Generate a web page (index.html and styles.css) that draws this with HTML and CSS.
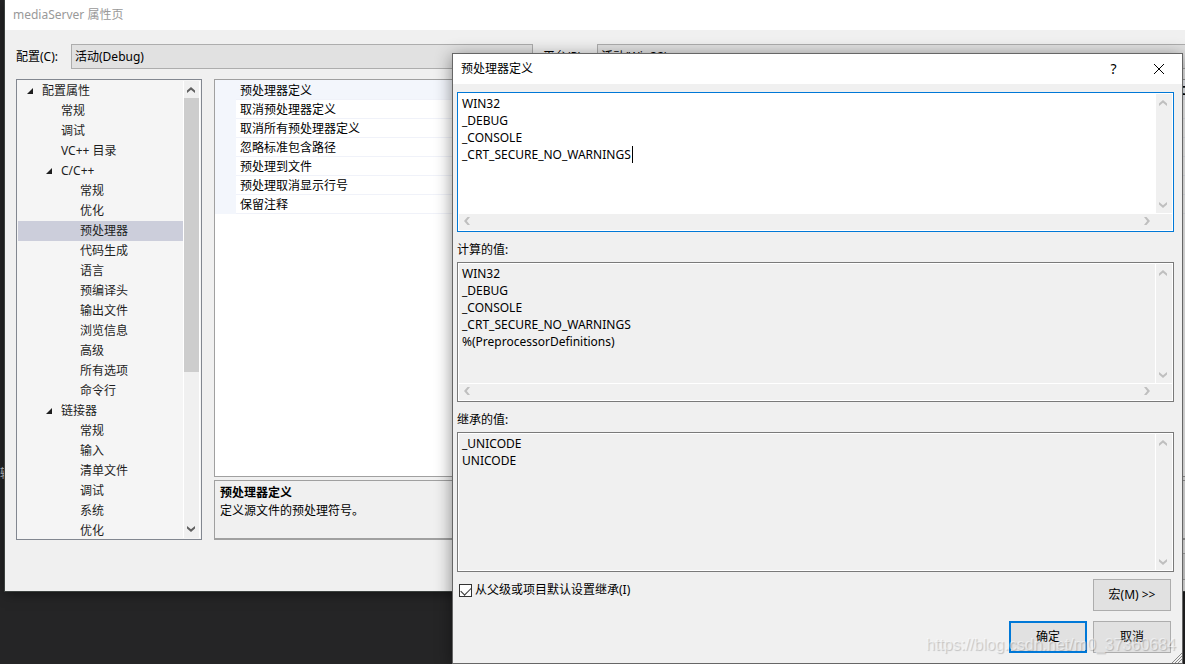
FILE: index.html
```html
<!DOCTYPE html>
<html lang="zh-CN">
  <head>
    <meta charset="utf-8">
    <title>mediaServer 属性页</title>
    <meta name="viewport" content="width=device-width, initial-scale=1">
    <link rel="stylesheet" href="styles.css">
  </head>
  <body>
    <!-- Shared icons -->
    <svg class="symbols" aria-hidden="true">
      <symbol id="up" viewBox="0 0 8 6"><path d="M0 3.5L4 0L8 3.5V6L4 2.8L0 6Z"/></symbol>
      <symbol id="down" viewBox="0 0 8 6"><path d="M0 0L4 3.2L8 0V2.5L4 6L0 2.5Z"/></symbol>
      <symbol id="left" viewBox="0 0 6 8"><path d="M3.5 0L0 4L3.5 8H6L2.8 4L6 0Z"/></symbol>
      <symbol id="right" viewBox="0 0 6 8"><path d="M0 0L3.2 4L0 8H2.5L6 4L2.5 0Z"/></symbol>
    </svg>

    <div class="desktop">
      <div class="editor-text">输</div>

      <!-- Property pages -->
      <div class="window">
        <div class="window-title">mediaServer 属性页</div>
        <div class="config-row">
          <label for="config">配置(C):</label>
          <select id="config"><option>活动(Debug)</option></select>
          <label class="platform-label" for="platform">平台(P):</label>
          <select id="platform" class="platform"><option>活动(Win32)</option></select>
        </div>
        <div class="panes">
          <div class="tree">
            <ul class="tree-list">
              <li><button class="arrow" aria-label="折叠"></button>配置属性</li>
              <li class="level1">常规</li>
              <li class="level1">调试</li>
              <li class="level1">VC++ 目录</li>
              <li class="level1"><button class="arrow" aria-label="折叠"></button>C/C++</li>
              <li class="level2">常规</li>
              <li class="level2">优化</li>
              <li class="level2 selected">预处理器</li>
              <li class="level2">代码生成</li>
              <li class="level2">语言</li>
              <li class="level2">预编译头</li>
              <li class="level2">输出文件</li>
              <li class="level2">浏览信息</li>
              <li class="level2">高级</li>
              <li class="level2">所有选项</li>
              <li class="level2">命令行</li>
              <li class="level1"><button class="arrow" aria-label="折叠"></button>链接器</li>
              <li class="level2">常规</li>
              <li class="level2">输入</li>
              <li class="level2">清单文件</li>
              <li class="level2">调试</li>
              <li class="level2">系统</li>
              <li class="level2">优化</li>
            </ul>
            <div class="vbar tree-bar">
              <button aria-label="向上"><svg width="8" height="6"><use href="#up"/></svg></button>
              <div class="thumb"></div>
              <button aria-label="向下"><svg width="8" height="6"><use href="#down"/></svg></button>
            </div>
          </div>
          <div class="details">
            <div class="grid">
              <ul class="props">
                <li class="current"><span>预处理器定义</span><b>C</b></li>
                <li><span>取消预处理器定义</span></li>
                <li><span>取消所有预处理器定义</span></li>
                <li><span>忽略标准包含路径</span></li>
                <li><span>预处理到文件</span></li>
                <li><span>预处理取消显示行号</span></li>
                <li><span>保留注释</span></li>
              </ul>
            </div>
            <div class="description">
              <b>预处理器定义</b>
              <p>定义源文件的预处理符号。</p>
            </div>
          </div>
        </div>
        <div class="window-footer">
          <button class="apply">应用(A)</button>
        </div>
      </div>

      <!-- Preprocessor definitions -->
      <div class="dialog" role="dialog" aria-labelledby="dialog-title">
        <div class="dialog-title">
          <span id="dialog-title">预处理器定义</span>
          <button aria-label="帮助">?</button>
          <button aria-label="关闭">
            <svg width="12" height="12" viewBox="0 0 12 12"><path d="M1 1L11 11M11 1L1 11" stroke="#000" fill="none"/></svg>
          </button>
        </div>
        <div class="dialog-body">
          <div class="box active">
            <textarea aria-label="预处理器定义" spellcheck="false">WIN32
_DEBUG
_CONSOLE
_CRT_SECURE_NO_WARNINGS</textarea>
            <div class="caret"></div>
            <div class="vbar">
              <button aria-label="向上"><svg width="8" height="6"><use href="#up"/></svg></button>
              <button aria-label="向下"><svg width="8" height="6"><use href="#down"/></svg></button>
            </div>
            <div class="hbar">
              <button aria-label="向左"><svg width="6" height="8"><use href="#left"/></svg></button>
              <button aria-label="向右"><svg width="6" height="8"><use href="#right"/></svg></button>
            </div>
          </div>

          <label class="box-label" for="computed">计算的值:</label>
          <div class="box">
            <textarea id="computed" readonly spellcheck="false">WIN32
_DEBUG
_CONSOLE
_CRT_SECURE_NO_WARNINGS
%(PreprocessorDefinitions)</textarea>
            <div class="vbar">
              <button aria-label="向上"><svg width="8" height="6"><use href="#up"/></svg></button>
              <button aria-label="向下"><svg width="8" height="6"><use href="#down"/></svg></button>
            </div>
            <div class="hbar">
              <button aria-label="向左"><svg width="6" height="8"><use href="#left"/></svg></button>
              <button aria-label="向右"><svg width="6" height="8"><use href="#right"/></svg></button>
            </div>
          </div>

          <label class="box-label" for="inherited">继承的值:</label>
          <div class="box">
            <textarea id="inherited" readonly spellcheck="false">_UNICODE
UNICODE</textarea>
            <div class="vbar">
              <button aria-label="向上"><svg width="8" height="6"><use href="#up"/></svg></button>
              <button aria-label="向下"><svg width="8" height="6"><use href="#down"/></svg></button>
            </div>
          </div>

          <div class="options">
            <label class="inherit"><input type="checkbox" checked>从父级或项目默认设置继承(I)</label>
            <button class="btn">宏(M) &gt;&gt;</button>
          </div>
          <div class="actions">
            <button class="btn default">确定</button>
            <button class="btn">取消</button>
          </div>
        </div>
        <svg class="grip" width="10" height="10" viewBox="0 0 10 10"><path d="M0 10L10 0M3 10L10 3M6 10L10 6" stroke="#888" fill="none"/></svg>
      </div>

      <div class="watermark">https://blog.csdn.net/m0_37360684</div>
    </div>
  </body>
</html>
```

FILE: styles.css
```css
* {
  box-sizing: border-box;
}
body {
  margin: 0;
  overflow: hidden;
  background: #252526;
  color: #000;
  font: 12px/18px "Noto Sans", "Noto Sans CJK SC", sans-serif;
}
button, select, textarea {
  font: inherit;
  color: inherit;
}
button {
  padding: 0;
  border: none;
  background: none;
}
ul {
  margin: 0;
  padding: 0;
  list-style: none;
}
.symbols {
  position: absolute;
  width: 0;
  height: 0;
}
.desktop {
  position: relative;
  height: 100vh;
  overflow: hidden;
}
.editor-text {
  position: absolute;
  top: 465px;
  left: 0;
  color: #ccc;
}

/* Property pages window, runs off the right edge */
.window {
  position: absolute;
  top: 0;
  left: 5px;
  right: -16px;
  height: 89vh;
  display: flex;
  flex-direction: column;
  background: #f0f0f0;
  box-shadow: 0 0 0 1px #3c413f, 0 2px 12px rgba(0, 0, 0, 0.5);
}
.window-title {
  height: 30px;
  padding-left: 8px;
  line-height: 30px;
  background: #fff;
  color: #999;
}
.config-row {
  display: flex;
  align-items: center;
  padding: 14px 0 10px 11px;
}
.config-row label {
  width: 55px;
}
.config-row .platform-label {
  width: 54px;
  margin-left: 10px;
}
select {
  width: 462px;
  height: 25px;
  padding: 0 3px;
  border: 1px solid #adadad;
  border-radius: 0;
  background: #e1e1e1;
  appearance: none;
}
.platform {
  flex: 1;
}
.panes {
  flex: 1;
  display: flex;
  gap: 12px;
  min-height: 0;
  padding-left: 11px;
}

/* Tree */
.tree {
  display: flex;
  width: 186px;
  padding: 1px;
  border: 1px solid #828790;
  background: #f5f5f5;
}
.tree-list {
  flex: 1;
  overflow: hidden;
  color: #1e1e1e;
}
.tree-list li {
  display: flex;
  align-items: center;
  height: 20px;
  padding-left: 24px;
}
.tree-list .level1 {
  padding-left: 43px;
}
.tree-list .level2 {
  padding-left: 62px;
}
.tree-list .selected {
  background: #cccedb;
}
.arrow {
  width: 6px;
  height: 6px;
  margin-left: -15px;
  margin-right: 9px;
  background: #1e1e1e;
  clip-path: polygon(100% 0, 100% 100%, 0 100%);
}

/* Scrollbars */
.vbar, .hbar {
  display: flex;
  justify-content: space-between;
  background: #f0f0f0;
  fill: #bfbfbf;
}
.vbar {
  flex-direction: column;
  width: 17px;
  border-left: 1px solid #fff;
}
.vbar button, .hbar button {
  display: flex;
  align-items: center;
  justify-content: center;
  width: 14px;
  height: 17px;
}
.hbar button {
  width: 16px;
  height: 14px;
}
.hbar {
  height: 17px;
}
.tree-bar {
  border-right: 1px solid #fff;
  fill: #606060;
}
.thumb {
  width: 15px;
  height: 60%;
  margin-bottom: auto;
  background: #cdcdcd;
}

/* Property list */
.details {
  flex: 1;
  display: flex;
  flex-direction: column;
  gap: 3px;
}
.grid {
  flex: 1;
  border: 1px solid #a0a0a0;
  background: #fff;
}
.props {
  border-left: 21px solid #f3f6fc;
}
.props li {
  display: flex;
  justify-content: space-between;
  height: 19px;
  padding: 0 13px 0 4px;
  border-bottom: 1px solid #f0f2f9;
  line-height: 20px;
}
.props .current {
  height: 20px;
  padding-top: 1px;
  background: #f3f6fc;
}
.description {
  height: 60px;
  padding: 3px 5px;
  border: 1px solid #a0a0a0;
  border-bottom-width: 2px;
}
.description p {
  margin: 0;
}
.window-footer {
  display: flex;
  justify-content: flex-end;
  padding: 13px 10px 11px;
}
.apply {
  width: 75px;
  height: 27px;
  border: 1px solid #adadad;
  background: #e1e1e1;
}

/* Dialog */
.dialog {
  position: absolute;
  top: 53px;
  left: 452px;
  right: 2px;
  border: 1px solid #666;
  background: #f0f0f0;
  box-shadow: 0 3px 16px rgba(0, 0, 0, 0.45);
}
.dialog-title {
  display: flex;
  align-items: center;
  height: 30px;
  padding: 0 1px 0 8px;
  background: #fff;
}
.dialog-title span {
  flex: 1;
}
.dialog-title button {
  display: flex;
  align-items: center;
  justify-content: center;
  width: 45px;
  height: 30px;
  font-size: 14px;
}
.dialog-body {
  padding: 8px 8px 10px 4px;
}
.box {
  position: relative;
  display: grid;
  grid-template-columns: 1fr auto;
  grid-template-rows: 1fr auto;
  height: 140px;
  border: 1px solid #7a7a7a;
  outline: 1px solid #fff;
  outline-offset: -2px;
  padding: 1px;
}
.box textarea {
  min-width: 0;
  padding: 1px 3px;
  border: none;
  outline: none;
  resize: none;
  overflow: hidden;
  background: #f0f0f0;
  line-height: 17px;
  white-space: pre;
}
.box .hbar {
  grid-column: 1 / 3;
  padding-right: 17px;
  border-top: 1px solid #fff;
}
.active {
  border-color: #0078d7;
}
.active textarea {
  background: #fff;
}
.caret {
  position: absolute;
  top: 53px;
  left: 174px;
  width: 1px;
  height: 17px;
  background: #000;
}
.box-label {
  display: block;
  padding: 9px 0 3px;
}
.options {
  display: flex;
  justify-content: space-between;
  padding: 7px 3px 10px 2px;
}
.inherit {
  display: flex;
  align-items: center;
  gap: 3px;
  height: 22px;
}
.inherit input {
  appearance: none;
  width: 13px;
  height: 13px;
  margin: 0;
  border: 1px solid #333;
  background: #fff;
}
.inherit input:checked::before {
  content: "";
  display: block;
  width: 9px;
  height: 5px;
  margin: 2px 1px;
  border: solid #333;
  border-width: 0 0 1px 1px;
  transform: rotate(-45deg);
}
.btn {
  width: 78px;
  height: 32px;
  border: 1px solid #adadad;
  background: #e1e1e1;
}
.default {
  border: 2px solid #0078d7;
}
.actions {
  display: flex;
  justify-content: flex-end;
  gap: 6px;
  padding-right: 3px;
}
.grip {
  position: absolute;
  right: 0;
  bottom: 0;
}
.watermark {
  position: absolute;
  right: 9px;
  bottom: 9px;
  font: 16px/20px "Liberation Sans", sans-serif;
  color: rgba(255, 255, 255, 0.5);
  text-shadow: 1px 1px 1px rgba(0, 0, 0, 0.2);
  pointer-events: none;
}
```
